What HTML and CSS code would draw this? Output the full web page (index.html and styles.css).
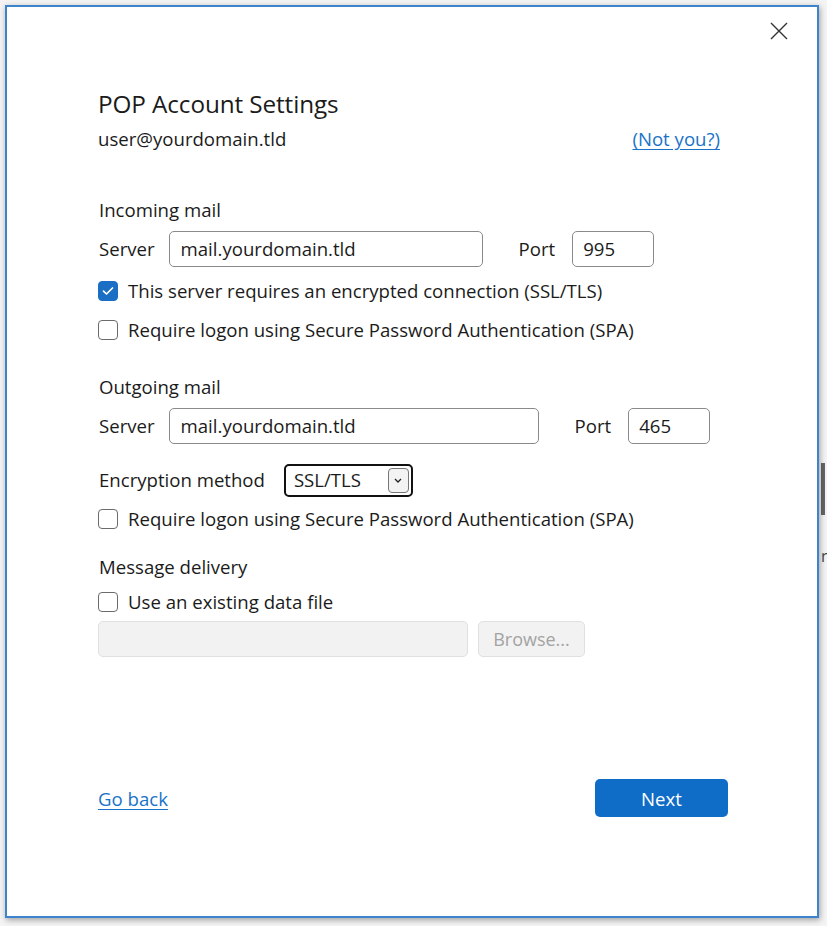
FILE: index.html
```html
<!DOCTYPE html>
<html>
<head>
<meta charset="utf-8">
<link rel="stylesheet" href="styles.css">
</head>
<body>
<div class="edge">
  <div class="edge-bar"></div>
  <div class="edge-char">r</div>
</div>
<div class="window">
  <div class="titlebar">
    <button class="close" aria-label="Close">
      <svg width="18" height="18" viewBox="0 0 18 18"><path d="M1 1 L17 17 M17 1 L1 17" stroke="#333" stroke-width="1.4" fill="none"/></svg>
    </button>
  </div>
  <div class="content">
    <h1 class="title">POP Account Settings</h1>
    <div class="account-row">
      <span class="email">user@yourdomain.tld</span>
      <a class="link" href="#">(Not you?)</a>
    </div>

    <div class="section-label first">Incoming mail</div>
    <div class="field-row r1">
      <span class="lbl">Server</span>
      <div class="input server-in">mail.yourdomain.tld</div>
      <span class="lbl port-lbl">Port</span>
      <div class="input port-in">995</div>
    </div>
    <label class="check-row c1"><span class="box checked"><svg width="12" height="10" viewBox="0 0 12 10"><path d="M1.5 5.2 L4.5 8 L10.5 2" stroke="#fff" stroke-width="1.7" fill="none" stroke-linecap="round" stroke-linejoin="round"/></svg></span>This server requires an encrypted connection (SSL/TLS)</label>
    <label class="check-row c2"><span class="box"></span>Require logon using Secure Password Authentication (SPA)</label>

    <div class="section-label second">Outgoing mail</div>
    <div class="field-row r2">
      <span class="lbl">Server</span>
      <div class="input server-out">mail.yourdomain.tld</div>
      <span class="lbl port-lbl">Port</span>
      <div class="input port-in">465</div>
    </div>
    <div class="enc-row">
      <span class="lbl">Encryption method</span>
      <div class="select">
        <span class="sel-val">SSL/TLS</span>
        <span class="sel-btn"><svg width="8" height="5" viewBox="0 0 8 5"><path d="M1 1 L4 4 L7 1" stroke="#222" stroke-width="1.3" fill="none"/></svg></span>
      </div>
    </div>
    <label class="check-row c3"><span class="box"></span>Require logon using Secure Password Authentication (SPA)</label>

    <div class="section-label third">Message delivery</div>
    <label class="check-row c4"><span class="box"></span>Use an existing data file</label>
    <div class="file-row">
      <div class="input disabled file-in"></div>
      <div class="browse">Browse...</div>
    </div>

    <div class="footer">
      <a class="link goback" href="#">Go back</a>
      <button class="next">Next</button>
    </div>
  </div>
</div>
</body>
</html>
```
FILE: styles.css
```css
html, body {
  margin: 0;
  padding: 0;
}
body {
  width: 827px;
  height: 926px;
  background: #f4f4f4;
  font-family: "Open Sans", "Noto Sans", sans-serif;
  color: #1b1b1b;
  position: relative;
  overflow: hidden;
}
.edge {
  position: absolute;
  left: 821px;
  top: 455px;
  width: 6px;
}
.edge-bar {
  width: 4px;
  height: 52px;
  margin-top: 8px;
  background: #666;
}
.edge-char {
  font-size: 16px;
  color: #444;
  margin-top: 30px;
}
.window {
  position: absolute;
  left: 5px;
  top: 5px;
  width: 810px;
  height: 909px;
  background: #fff;
  border: 2px solid #3d84cc;
  box-shadow: 1px 2px 6px rgba(0,0,0,0.35);
}
.titlebar {
  height: 50px;
  display: flex;
  justify-content: flex-end;
  align-items: flex-start;
}
.close {
  margin: 14px 28px 0 0;
  width: 20px;
  height: 20px;
  padding: 0;
  border: none;
  background: none;
  display: flex;
  align-items: center;
  justify-content: center;
}
.content {
  padding: 0 96px 0 91px;
}
.title {
  margin: 31px 0 0 0;
  font-size: 24.3px;
  font-weight: 400;
  line-height: 32px;
  height: 32px;
  color: #1b1b1b;
  letter-spacing: -0.1px;
}
.account-row {
  display: flex;
  justify-content: space-between;
  align-items: center;
  margin-top: 6px;
  font-size: 18.6px;
  line-height: 26px;
  height: 26px;
}
.account-row .link {
  margin-right: 1px;
}
.link {
  color: #1a73c8;
  text-decoration: underline;
  text-underline-offset: 3px;
}
.section-label {
  font-size: 18.6px;
  line-height: 26px;
  height: 26px;
  margin-left: 1px;
}
.section-label.first { margin-top: 45px; }
.section-label.second { margin-top: 31px; }
.section-label.third { margin-top: 22px; }
.lbl {
  font-size: 18.6px;
  line-height: 26px;
}
.field-row {
  display: flex;
  align-items: center;
  margin-top: 8px;
  margin-left: 1px;
  height: 36px;
}
.input {
  box-sizing: border-box;
  height: 36px;
  border: 1px solid #8a8a8a;
  border-radius: 5px;
  padding: 0 11px;
  font-size: 18.6px;
  line-height: 33px;
  color: #1b1b1b;
}
.server-in { margin-left: 14px; width: 314px; }
.server-out { margin-left: 14px; width: 370px; }
.port-lbl { margin-left: 36px; }
.port-in { margin-left: 17px; width: 82px; padding-left: 10px; }
.check-row {
  display: flex;
  align-items: center;
  font-size: 18.6px;
  line-height: 26px;
  height: 26px;
}
.box {
  box-sizing: border-box;
  width: 20px;
  height: 20px;
  border: 1px solid #6b6b6b;
  border-radius: 4px;
  margin-right: 10px;
  display: flex;
  align-items: center;
  justify-content: center;
  background: #fff;
  flex-shrink: 0;
}
.box.checked {
  background: #1a6fc4;
  border-color: #1a6fc4;
}
.c1 { margin-top: 11px; }
.c2 { margin-top: 13px; }
.c3 { margin-top: 10px; }
.c4 { margin-top: 9px; }
.enc-row {
  display: flex;
  align-items: center;
  margin-top: 20px;
  margin-left: 1px;
  height: 32px;
}
.select {
  box-sizing: border-box;
  margin-left: 19px;
  width: 129px;
  height: 33px;
  border: 2.5px solid #111;
  border-radius: 5px;
  display: flex;
  align-items: center;
  justify-content: space-between;
  padding: 0 2px 0 8px;
}
.sel-val {
  font-size: 18.6px;
  line-height: 26px;
}
.sel-btn {
  box-sizing: border-box;
  width: 21px;
  height: 25px;
  border: 1px solid #777;
  border-radius: 4px;
  background: #f3f3f3;
  display: flex;
  align-items: center;
  justify-content: center;
}
.file-row {
  display: flex;
  margin-top: 6px;
  gap: 10px;
}
.disabled, .browse {
  box-sizing: border-box;
  height: 36px;
  background: #f2f2f2;
  border: 1px solid #e0e0e0;
  border-radius: 5px;
}
.file-in { width: 370px; }
.browse {
  width: 107px;
  font-size: 18px;
  color: #a3a3a3;
  display: flex;
  align-items: center;
  justify-content: center;
}
.footer {
  display: flex;
  justify-content: space-between;
  align-items: center;
  margin-top: 122px;
}
.goback {
  font-size: 18.6px;
  margin-left: 0;
}
.next {
  width: 133px;
  height: 38px;
  background: #0f6cc7;
  color: #fff;
  border: none;
  border-radius: 5px;
  font-family: inherit;
  font-size: 18.6px;
  margin-right: -7px;
}
```
